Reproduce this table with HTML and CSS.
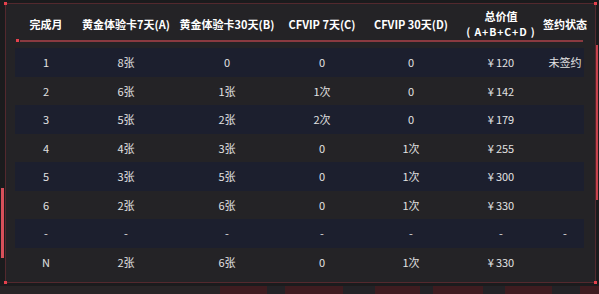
FILE: index.html
```html
<!DOCTYPE html>
<html lang="zh-CN">
<head>
<meta charset="utf-8">
<title>完成月奖励</title>
<link rel="stylesheet" href="styles.css">
</head>
<body>
<div class="page">
  <div class="bar-left"></div>
  <div class="bar-right"></div>
  <div class="frame">
    <span class="dot dot-tl"></span>
    <span class="dot dot-tr"></span>
    <span class="dot dot-bl"></span>
    <span class="dot dot-br"></span>
    <div class="row head">
      <div class="cell">完成月</div>
      <div class="cell">黄金体验卡7天(A)</div>
      <div class="cell">黄金体验卡30天(B)</div>
      <div class="cell">CFVIP 7天(C)</div>
      <div class="cell">CFVIP 30天(D)</div>
      <div class="cell two"><span>总价值</span><span class="sum">( A+B+C+D )</span></div>
      <div class="cell">签约状态</div>
    </div>
    <div class="sep"><span class="sep-dot"></span><span class="sep-line"></span></div>
    <div class="body">
      <div class="row stripe"><div class="cell">1</div><div class="cell">8张</div><div class="cell">0</div><div class="cell">0</div><div class="cell">0</div><div class="cell"><span class="yen">¥</span>120</div><div class="cell">未签约</div></div>
      <div class="row"><div class="cell">2</div><div class="cell">6张</div><div class="cell">1张</div><div class="cell">1次</div><div class="cell">0</div><div class="cell"><span class="yen">¥</span>142</div><div class="cell"></div></div>
      <div class="row stripe"><div class="cell">3</div><div class="cell">5张</div><div class="cell">2张</div><div class="cell">2次</div><div class="cell">0</div><div class="cell"><span class="yen">¥</span>179</div><div class="cell"></div></div>
      <div class="row"><div class="cell">4</div><div class="cell">4张</div><div class="cell">3张</div><div class="cell">0</div><div class="cell">1次</div><div class="cell"><span class="yen">¥</span>255</div><div class="cell"></div></div>
      <div class="row stripe"><div class="cell">5</div><div class="cell">3张</div><div class="cell">5张</div><div class="cell">0</div><div class="cell">1次</div><div class="cell"><span class="yen">¥</span>300</div><div class="cell"></div></div>
      <div class="row"><div class="cell">6</div><div class="cell">2张</div><div class="cell">6张</div><div class="cell">0</div><div class="cell">1次</div><div class="cell"><span class="yen">¥</span>330</div><div class="cell"></div></div>
      <div class="row stripe"><div class="cell">-</div><div class="cell">-</div><div class="cell">-</div><div class="cell">-</div><div class="cell">-</div><div class="cell">-</div><div class="cell">-</div></div>
      <div class="row"><div class="cell">N</div><div class="cell">2张</div><div class="cell">6张</div><div class="cell">0</div><div class="cell">1次</div><div class="cell"><span class="yen">¥</span>330</div><div class="cell"></div></div>
    </div>
  </div>
  <div class="strip"></div>
</div>
</body>
</html>
```
FILE: styles.css
```css
html, body {
  margin: 0;
  padding: 0;
  width: 599px;
  height: 294px;
  overflow: hidden;
  background: #1b1b1d;
}
.page {
  position: relative;
  width: 599px;
  height: 294px;
  padding-top: 3px;
  box-sizing: border-box;
  font-family: "Noto Sans CJK SC", "Noto Sans", sans-serif;
  color: #e2e2e2;
}
.bar-left {
  position: absolute;
  left: 1px;
  top: 188px;
  width: 3px;
  height: 70px;
  background: #d8505a;
}
.bar-right {
  position: absolute;
  right: 1px;
  top: 45px;
  width: 2px;
  height: 155px;
  background: #c8434e;
}
.frame {
  position: relative;
  margin: 0 3px 0 5px;
  height: 280px;
  box-sizing: border-box;
  border: 1px solid #53292e;
  background: #242326;
  padding: 0 11px 0 9px;
}
.dot {
  position: absolute;
  width: 3px;
  height: 3px;
  background: #e5404c;
}
.dot-tl { left: -2px; top: -2px; }
.dot-tr { right: -2px; top: -2px; }
.dot-bl { left: -2px; bottom: -2px; }
.dot-br { right: -2px; bottom: -2px; }
.row {
  display: grid;
  grid-template-columns: 62px 98px 104px 86px 92px 88px 40px;
  height: 28.5px;
  font-size: 11px;
}
.row.stripe {
  background: #1c1f2e;
}
.cell {
  display: flex;
  align-items: center;
  justify-content: center;
  white-space: nowrap;
}
.yen {
  margin-right: 2px;
}
.head {
  height: 35px;
  box-sizing: border-box;
  padding-top: 4px;
  color: #ffffff;
  font-weight: 700;
  font-size: 11px;
}
.head .two {
  flex-direction: column;
  line-height: 15px;
}
.head .sum {
  font-size: 10.5px;
  letter-spacing: 0.9px;
}
.sep {
  display: flex;
  align-items: center;
  height: 3px;
  margin-left: 1px;
  margin-right: 1px;
}
.sep-dot {
  width: 3px;
  height: 3px;
  background: #e5404c;
}
.sep-line {
  flex: 1;
  height: 2px;
  margin-left: 1px;
  background: #8a3a40;
}
.body {
  margin-top: 6px;
}
.strip {
  margin-top: 3px;
  height: 9px;
  background: linear-gradient(90deg,
    #272426 0, #272426 220px,
    #3e1c20 220px, #3e1c20 267px,
    #232226 267px, #232226 285px,
    #3e1c20 285px, #3e1c20 343px,
    #232226 343px, #232226 375px,
    #3e1c20 375px, #3e1c20 420px,
    #232226 420px, #232226 433px,
    #3e1c20 433px, #3e1c20 483px,
    #232226 483px, #232226 505px,
    #3e1c20 505px, #3e1c20 552px,
    #232226 552px, #232226 580px,
    #3e1c20 580px, #3e1c20 599px);
}
```
